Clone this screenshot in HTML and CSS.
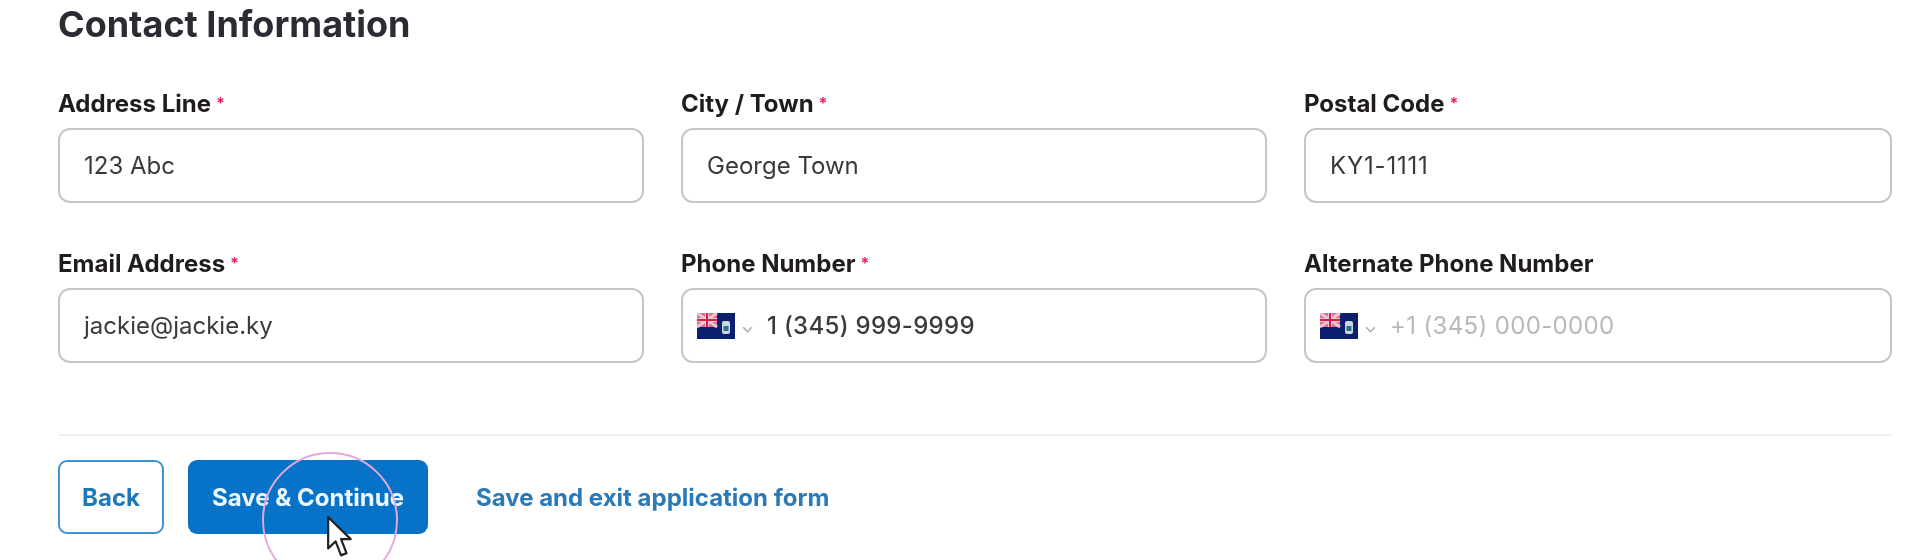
FILE: index.html
```html
<!DOCTYPE html>
<html lang="en">
  <head>
    <meta charset="UTF-8" />
    <meta name="viewport" content="width=device-width, initial-scale=1.0" />
    <title>Contact Information</title>
    <link rel="stylesheet" href="styles.css">
  </head>
  <body>
    <div class="formPage">
      <h2 class="formTitle">Contact Information</h2>
      <div class="fieldGrid">
        <div class="field">
          <div class="fieldLabel">Address Line<span class="req">*</span></div>
          <div class="fieldBox">123 Abc</div>
        </div>
        <div class="field">
          <div class="fieldLabel">City / Town<span class="req">*</span></div>
          <div class="fieldBox">George Town</div>
        </div>
        <div class="field">
          <div class="fieldLabel">Postal Code<span class="req">*</span></div>
          <div class="fieldBox postal">KY1-1111</div>
        </div>
        <div class="field">
          <div class="fieldLabel">Email Address<span class="req">*</span></div>
          <div class="fieldBox">jackie@jackie.ky</div>
        </div>
        <div class="field">
          <div class="fieldLabel">Phone Number<span class="req">*</span></div>
          <div class="fieldBox phoneBox">
            <svg class="flag" viewBox="0 0 38 26"><use href="#kyFlag" /></svg>
            <svg class="chev" viewBox="0 0 12 8"><path d="M2 2l4 4 4-4" /></svg>
            <span class="phoneNum">1 (345) 999-9999</span>
          </div>
        </div>
        <div class="field">
          <div class="fieldLabel">Alternate Phone Number</div>
          <div class="fieldBox phoneBox">
            <svg class="flag" viewBox="0 0 38 26"><use href="#kyFlag" /></svg>
            <svg class="chev" viewBox="0 0 12 8"><path d="M2 2l4 4 4-4" /></svg>
            <span class="phoneNum placeholder">+1 (345) 000-0000</span>
          </div>
        </div>
      </div>
      <div class="formActions">
        <a class="btn btnBack">Back</a>
        <a class="btn btnSave">Save &amp; Continue</a>
        <a class="exitLink">Save and exit application form</a>
        <!-- 录屏时的鼠标高亮 -->
        <div class="clickRing"></div>
        <svg class="cursor" viewBox="0 0 26 38" preserveAspectRatio="none">
          <path d="M2 1v27l7-6 5 12 5-2-5-12h9z" />
        </svg>
      </div>
    </div>

    <svg class="defs" width="0" height="0">
      <defs>
        <g id="kyFlag">
          <rect width="38" height="26" fill="#0b1f6e" />
          <rect width="20" height="14" fill="#d9708f" />
          <path d="M0 0l20 14M20 0L0 14" stroke="#f0c4d2" stroke-width="3" />
          <path d="M10 0v14M0 7h20" stroke="#f0c4d2" stroke-width="4" />
          <path d="M10 0v14M0 7h20" stroke="#cf2546" stroke-width="2" />
          <rect x="25" y="8" width="8" height="13" rx="2" fill="#c9d8e0" />
          <rect x="26.5" y="13" width="5" height="5" fill="#2f6f92" />
        </g>
      </defs>
    </svg>
  </body>
</html>
```

FILE: styles.css
```css
* {
  margin: 0;
  padding: 0;
  box-sizing: border-box;
}
html,
body {
  height: 560px;
  overflow: hidden;
  background: #fff;
}
body {
  font-family: Inter, "Liberation Sans", sans-serif;
}
.formPage {
  height: 560px;
  overflow: hidden;
  padding: 0 28px 0 58px;
  filter: blur(0.6px);
}
.formTitle {
  font-size: 36px;
  font-weight: 700;
  line-height: 48px;
  color: #2b2b33;
}
.fieldGrid {
  display: grid;
  grid-template-columns: 586px 586px 1fr;
  column-gap: 37px;
  row-gap: 48px;
  margin-top: 43px;
}
.fieldLabel {
  font-size: 24px;
  font-weight: 700;
  line-height: 26px;
  color: #201c1c;
  margin-bottom: 11px;
}
.req {
  color: #e0245e;
  font-size: 16px;
  line-height: 0;
  margin-left: 5px;
  vertical-align: 3px;
}
.fieldBox {
  height: 75px;
  display: flex;
  align-items: center;
  padding: 0 24px;
  border: 2px solid #c6c6c6;
  border-radius: 12px;
  font-size: 24px;
  color: #3a3a3a;
}
.postal {
  letter-spacing: 0.8px;
}
.phoneBox {
  padding: 0 14px;
}
.flag {
  width: 38px;
  height: 26px;
  flex: none;
}
.chev {
  width: 13px;
  height: 9px;
  margin: 8px 0 0 6px;
  flex: none;
}
.chev path {
  fill: none;
  stroke: #aaa;
  stroke-width: 1.4;
}
.phoneNum {
  margin-left: 13px;
  font-weight: 500;
  letter-spacing: 0.3px;
}
.placeholder {
  font-weight: 400;
  letter-spacing: 0.35px;
  color: #b8b8b8;
}
.formActions {
  position: relative;
  display: flex;
  align-items: center;
  margin-top: 71px;
  padding-top: 24px;
  border-top: 2px solid #f1f1f1;
}
.btn {
  height: 74px;
  display: flex;
  align-items: center;
  justify-content: center;
  border-radius: 9px;
  font-size: 24px;
  font-weight: 700;
}
.btnBack {
  width: 106px;
  border: 2px solid #3f93cf;
  color: #1d79b8;
}
.btnSave {
  width: 240px;
  margin-left: 24px;
  background: #0673c9;
  color: #eef7fd;
}
.exitLink {
  margin-left: 48px;
  font-size: 24px;
  font-weight: 700;
  color: #2a7ab9;
}
.clickRing {
  position: absolute;
  left: 204px;
  top: 16px;
  width: 136px;
  height: 136px;
  border: 2px solid #e6a9d8;
  border-radius: 50%;
}
.cursor {
  position: absolute;
  left: 268px;
  top: 80px;
  width: 28px;
  height: 44px;
}
.cursor path {
  fill: #fff;
  stroke: #222;
  stroke-width: 2;
  stroke-linejoin: round;
}
.defs {
  position: absolute;
}
```
